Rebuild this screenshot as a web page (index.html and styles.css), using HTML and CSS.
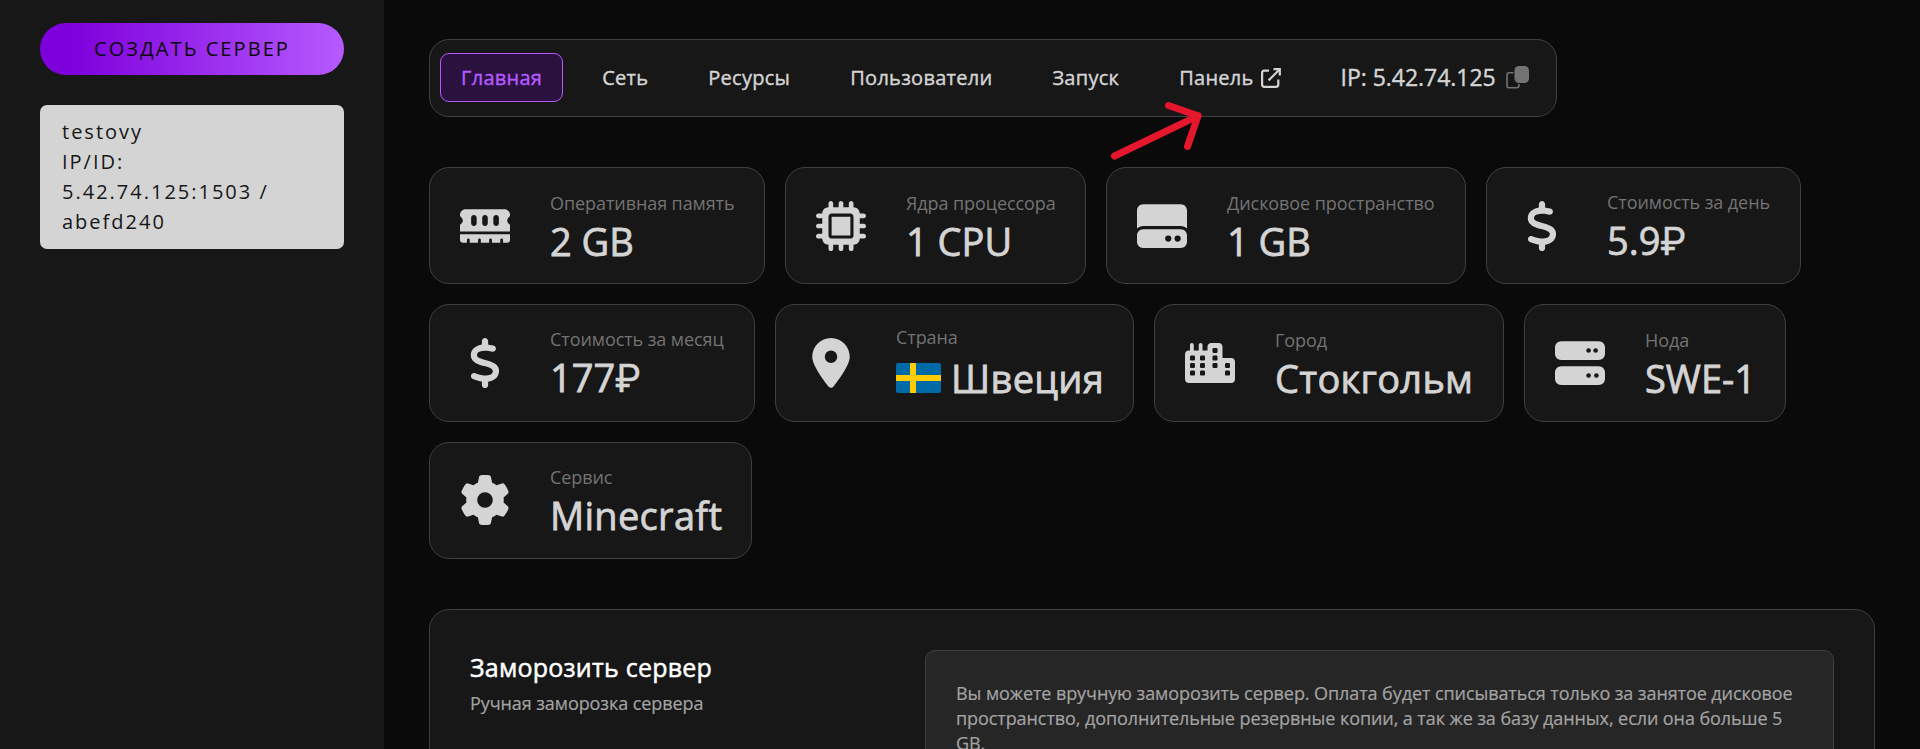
FILE: index.html
```html
<!DOCTYPE html>
<html lang="ru">
<head>
<meta charset="utf-8">
<title>Сервер</title>
<link rel="stylesheet" href="styles.css">
</head>
<body>
<div class="layout">
  <aside class="sidebar">
    <button class="create">СОЗДАТЬ СЕРВЕР</button>
    <div class="server">testovy<br>IP/ID:<br>5.42.74.125:1503 /<br>abefd240</div>
  </aside>
  <main class="content">
    <nav class="nav">
      <a class="tab active"><span>Главная</span></a>
      <a class="tab"><span>Сеть</span></a>
      <a class="tab"><span>Ресурсы</span></a>
      <a class="tab"><span>Пользователи</span></a>
      <a class="tab"><span>Запуск</span></a>
      <a class="tab"><span>Панель</span>
        <svg class="ext" viewBox="0 0 20 20" fill="none" stroke="currentColor" stroke-width="2.200"><path d="M8 2.600H3.400Q1.100 2.600 1.100 4.900V16.600Q1.100 18.900 3.400 18.900H15Q17.300 18.900 17.300 16.600V11.500"/><path d="M7.600 12.400 18 2"/><path d="M12.500 1.200H18.800V7.500"/></svg>
      </a>
      <div class="ip"><span>IP: 5.42.74.125</span>
        <svg class="copy" viewBox="0 0 23 23"><path d="M7.500 6.800H3Q1 6.800 1 8.800V19.800Q1 21.800 3 21.800H10.500Q13 21.800 13 19.300V18" fill="none" stroke="#737373" stroke-width="1.600"/><rect x="8.500" y="0" width="14.500" height="17" rx="4.500" fill="#737373"/></svg>
      </div>
      <svg class="arrow" viewBox="0 0 100 64" fill="none" stroke="#e5172c" stroke-width="7" stroke-linecap="round" stroke-linejoin="round"><path d="M4.500 56 88 15.800"/><path d="M58.500 5.500 88 15.800 77.500 46.500"/></svg>
    </nav>
    <section class="cards">
      <div class="card w-ram">
        <svg class="icon" viewBox="0 0 576 512"><path d="M64 64C28.700 64 0 92.700 0 128v7.400c0 6.800 4.400 12.600 10.100 16.300C23.300 160.300 32 175.100 32 192s-8.700 31.700-21.900 40.300C4.400 236 0 241.800 0 248.600V320H576V248.600c0-6.800-4.400-12.600-10.100-16.300C552.700 223.700 544 208.900 544 192s8.700-31.700 21.900-40.300c5.700-3.700 10.100-9.500 10.100-16.300V128c0-35.300-28.700-64-64-64H64zM576 352H0v64c0 17.700 14.300 32 32 32H80V416c0-8.800 7.200-16 16-16s16 7.200 16 16v32h96V416c0-8.800 7.200-16 16-16s16 7.200 16 16v32h96V416c0-8.800 7.200-16 16-16s16 7.200 16 16v32h96V416c0-8.800 7.200-16 16-16s16 7.200 16 16v32h48c17.700 0 32-14.300 32-32V352zM192 160v64c0 17.700-14.300 32-32 32s-32-14.300-32-32V160c0-17.700 14.300-32 32-32s32 14.300 32 32zm128 0v64c0 17.700-14.300 32-32 32s-32-14.300-32-32V160c0-17.700 14.300-32 32-32s32 14.300 32 32zm128 0v64c0 17.700-14.300 32-32 32s-32-14.300-32-32V160c0-17.700 14.300-32 32-32s32 14.300 32 32z"/></svg>
        <div class="info"><div class="label">Оперативная память</div><div class="value">2 GB</div></div>
      </div>
      <div class="card w-cpu">
        <svg class="icon" viewBox="0 0 512 512"><path d="M176 24c0-13.300-10.700-24-24-24s-24 10.700-24 24V64c-35.300 0-64 28.700-64 64H24c-13.300 0-24 10.700-24 24s10.700 24 24 24H64v56H24c-13.300 0-24 10.700-24 24s10.700 24 24 24H64v56H24c-13.300 0-24 10.700-24 24s10.700 24 24 24H64c0 35.300 28.700 64 64 64v40c0 13.300 10.700 24 24 24s24-10.700 24-24V448h56v40c0 13.300 10.700 24 24 24s24-10.700 24-24V448h56v40c0 13.300 10.700 24 24 24s24-10.700 24-24V448c35.300 0 64-28.700 64-64h40c13.300 0 24-10.700 24-24s-10.700-24-24-24H448V280h40c13.300 0 24-10.700 24-24s-10.700-24-24-24H448V176h40c13.300 0 24-10.700 24-24s-10.700-24-24-24H448c0-35.300-28.700-64-64-64V24c0-13.300-10.700-24-24-24s-24 10.700-24 24V64H280V24c0-13.300-10.700-24-24-24s-24 10.700-24 24V64H176V24zM160 128H352c17.700 0 32 14.300 32 32V352c0 17.700-14.300 32-32 32H160c-17.700 0-32-14.300-32-32V160c0-17.700 14.300-32 32-32zm192 32H160V352H352V160z"/></svg>
        <div class="info"><div class="label">Ядра процессора</div><div class="value">1 CPU</div></div>
      </div>
      <div class="card w-disk">
        <svg class="icon" viewBox="0 0 512 512"><path d="M0 96C0 60.700 28.700 32 64 32H448c35.300 0 64 28.700 64 64V280.400c-17-15.200-39.400-24.400-64-24.400H64c-24.600 0-47 9.200-64 24.400V96zM64 288H448c35.300 0 64 28.700 64 64v64c0 35.300-28.700 64-64 64H64c-35.300 0-64-28.700-64-64V352c0-35.300 28.700-64 64-64zM320 416a32 32 0 1 0 0-64 32 32 0 1 0 0 64zm128-32a32 32 0 1 0 -64 0 32 32 0 1 0 64 0z"/></svg>
        <div class="info"><div class="label">Дисковое пространство</div><div class="value">1 GB</div></div>
      </div>
      <div class="card w-day">
        <svg class="icon" viewBox="0 0 320 512"><path d="M160 0c17.700 0 32 14.300 32 32V67.700c1.600 .2 3.100 .4 4.700 .7c.4 .1 .7 .1 1.100 .2l48 8.800c17.400 3.200 28.900 19.900 25.700 37.200s-19.900 28.900-37.200 25.700l-47.500-8.700c-31.300-4.600-58.900-1.500-78.300 6.200s-27.200 18.300-29 28.100c-2 10.700-.5 16.700 1.200 20.400c1.800 3.900 5.500 8.300 12.800 13.200c16.300 10.700 41.300 17.700 73.700 26.300l2.900 .8c28.600 7.600 63.600 16.800 89.600 33.800c14.200 9.300 27.600 21.900 35.900 39.500c8.500 17.900 10.300 37.900 6.400 59.200c-6.900 38-33.100 63.400-65.600 76.700c-13.700 5.600-28.600 9.200-44.400 11V480c0 17.700-14.300 32-32 32s-32-14.300-32-32V445.100c-.4-.1-.9-.1-1.300-.2l-.2 0 0 0c-24.400-3.800-64.500-14.300-91.500-26.300c-16.100-7.200-23.400-26.100-16.200-42.200s26.100-23.400 42.200-16.200c20.900 9.300 55.300 18.500 75.200 21.600c31.900 4.700 58.200 2 76-5.300c16.900-6.900 24.600-16.900 26.800-28.900c1.900-10.600 .4-16.700-1.300-20.400c-1.900-4-5.600-8.400-13-13.300c-16.400-10.700-41.500-17.700-74-26.300l-2.800-.7 0 0C119.400 279.300 84.400 270 58.400 253c-14.200-9.300-27.500-22-35.800-39.600c-8.400-17.900-10.100-37.900-6.100-59.200C23.700 116 52.300 91.200 84.800 78.300c13.300-5.300 27.900-8.900 43.200-11V32c0-17.700 14.300-32 32-32z"/></svg>
        <div class="info"><div class="label">Стоимость за день</div><div class="value">5.9<span class="rub">₽</span></div></div>
      </div>
      <div class="card w-month">
        <svg class="icon" viewBox="0 0 320 512"><path d="M160 0c17.700 0 32 14.300 32 32V67.700c1.600 .2 3.100 .4 4.700 .7c.4 .1 .7 .1 1.100 .2l48 8.800c17.400 3.200 28.900 19.900 25.700 37.200s-19.900 28.900-37.200 25.700l-47.500-8.700c-31.300-4.600-58.900-1.500-78.300 6.200s-27.200 18.300-29 28.100c-2 10.700-.5 16.700 1.200 20.400c1.800 3.900 5.500 8.300 12.800 13.200c16.300 10.700 41.300 17.700 73.700 26.300l2.900 .8c28.600 7.600 63.600 16.800 89.600 33.800c14.200 9.300 27.600 21.900 35.900 39.500c8.500 17.900 10.300 37.900 6.400 59.200c-6.900 38-33.100 63.400-65.600 76.700c-13.700 5.600-28.600 9.200-44.400 11V480c0 17.700-14.300 32-32 32s-32-14.300-32-32V445.100c-.4-.1-.9-.1-1.300-.2l-.2 0 0 0c-24.400-3.800-64.500-14.300-91.500-26.300c-16.100-7.200-23.400-26.100-16.200-42.200s26.100-23.400 42.200-16.200c20.900 9.300 55.300 18.500 75.200 21.600c31.900 4.700 58.200 2 76-5.300c16.900-6.900 24.600-16.900 26.800-28.900c1.900-10.600 .4-16.700-1.300-20.400c-1.900-4-5.600-8.400-13-13.300c-16.400-10.700-41.500-17.700-74-26.300l-2.800-.7 0 0C119.400 279.300 84.400 270 58.400 253c-14.200-9.300-27.500-22-35.800-39.600c-8.400-17.900-10.100-37.900-6.100-59.200C23.700 116 52.300 91.200 84.800 78.300c13.300-5.300 27.900-8.900 43.200-11V32c0-17.700 14.300-32 32-32z"/></svg>
        <div class="info"><div class="label">Стоимость за месяц</div><div class="value">177<span class="rub">₽</span></div></div>
      </div>
      <div class="card w-country">
        <svg class="icon" viewBox="0 0 384 512"><path d="M215.700 499.200C267 435 384 279.400 384 192C384 86 298 0 192 0S0 86 0 192c0 87.400 117 243 168.300 307.200c12.300 15.300 35.100 15.300 47.400 0zM192 128a64 64 0 1 1 0 128 64 64 0 1 1 0-128z"/></svg>
        <div class="info"><div class="label label-flag">Страна</div><div class="value value-flag word"><svg class="flag" viewBox="0 0 45 30"><rect width="45" height="30" rx="2" fill="#006aa7"/><path d="M14 0h6v30h-6zM0 12h45v6H0z" fill="#fecc00"/></svg><span>Швеция</span></div></div>
      </div>
      <div class="card w-city">
        <svg class="icon" viewBox="0 0 640 512"><path d="M480 48c0-26.500-21.500-48-48-48H336c-26.500 0-48 21.500-48 48V96H224V24c0-13.300-10.700-24-24-24s-24 10.700-24 24V96H112V24c0-13.300-10.700-24-24-24S64 10.700 64 24V96H48C21.500 96 0 117.500 0 144V464c0 26.500 21.500 48 48 48H592c26.500 0 48-21.500 48-48V240c0-26.500-21.500-48-48-48H480z"/><g fill="#171717"><rect x="352" y="64" width="64" height="64" rx="16"/><rect x="352" y="160" width="64" height="64" rx="16"/><rect x="352" y="256" width="64" height="64" rx="16"/><rect x="64" y="160" width="64" height="64" rx="16"/><rect x="64" y="256" width="64" height="64" rx="16"/><rect x="64" y="352" width="64" height="64" rx="16"/><rect x="192" y="160" width="64" height="64" rx="16"/><rect x="192" y="256" width="64" height="64" rx="16"/><rect x="192" y="352" width="64" height="64" rx="16"/><rect x="512" y="256" width="64" height="64" rx="16"/><rect x="512" y="352" width="64" height="64" rx="16"/></g></svg>
        <div class="info"><div class="label">Город</div><div class="value word">Стокгольм</div></div>
      </div>
      <div class="card w-node">
        <svg class="icon" viewBox="0 0 512 512"><path d="M64 32C28.700 32 0 60.700 0 96v64c0 35.300 28.700 64 64 64H448c35.300 0 64-28.700 64-64V96c0-35.300-28.700-64-64-64H64zm280 72a24 24 0 1 1 0 48 24 24 0 1 1 0-48zm48 24a24 24 0 1 1 48 0 24 24 0 1 1 -48 0zM64 288c-35.300 0-64 28.700-64 64v64c0 35.300 28.700 64 64 64H448c35.300 0 64-28.700 64-64V352c0-35.300-28.700-64-64-64H64zm280 72a24 24 0 1 1 0 48 24 24 0 1 1 0-48zm56 24a24 24 0 1 1 48 0 24 24 0 1 1 -48 0z"/></svg>
        <div class="info"><div class="label">Нода</div><div class="value">SWE-1</div></div>
      </div>
      <div class="card w-service">
        <svg class="icon" viewBox="0 0 512 512"><path d="M495.900 166.600c3.200 8.700 .5 18.400-6.400 24.600l-43.300 39.400c1.100 8.300 1.700 16.800 1.700 25.400s-.6 17.100-1.700 25.400l43.300 39.400c6.900 6.200 9.600 15.900 6.400 24.600c-4.400 11.900-9.700 23.300-15.800 34.300l-4.700 8.100c-6.600 11-14 21.400-22.100 31.200c-5.900 7.200-15.700 9.600-24.500 6.800l-55.700-17.700c-13.400 10.300-28.200 18.900-44 25.400l-12.500 57.100c-2 9.100-9 16.300-18.200 17.800c-13.800 2.300-28 3.500-42.500 3.500s-28.700-1.200-42.500-3.500c-9.200-1.500-16.200-8.700-18.200-17.800l-12.500-57.100c-15.800-6.500-30.600-15.100-44-25.400L83.100 425.900c-8.800 2.800-18.600 .3-24.500-6.800c-8.100-9.800-15.500-20.200-22.100-31.200l-4.700-8.100c-6.100-11-11.400-22.400-15.800-34.300c-3.200-8.700-.5-18.400 6.400-24.600l43.300-39.400C64.600 273.100 64 264.600 64 256s.6-17.100 1.700-25.400L22.400 191.200c-6.900-6.200-9.600-15.900-6.400-24.600c4.400-11.900 9.700-23.300 15.800-34.300l4.700-8.100c6.600-11 14-21.400 22.100-31.200c5.900-7.200 15.700-9.600 24.500-6.800l55.700 17.700c13.400-10.300 28.200-18.900 44-25.400l12.500-57.100c2-9.100 9-16.300 18.200-17.800C227.300 1.200 241.500 0 256 0s28.700 1.200 42.500 3.500c9.200 1.500 16.200 8.700 18.200 17.800l12.500 57.100c15.800 6.500 30.600 15.100 44 25.400l55.700-17.700c8.800-2.800 18.600-.3 24.500 6.800c8.100 9.800 15.500 20.200 22.100 31.200l4.700 8.100c6.100 11 11.400 22.400 15.800 34.300zM256 336a80 80 0 1 0 0-160 80 80 0 1 0 0 160z"/></svg>
        <div class="info"><div class="label">Сервис</div><div class="value word">Minecraft</div></div>
      </div>
    </section>
    <section class="freeze">
      <div class="freeze-head">
        <h2>Заморозить сервер</h2>
        <p>Ручная заморозка сервера</p>
      </div>
      <div class="notice">Вы можете вручную заморозить сервер. Оплата будет списываться только за занятое дисковое<br>пространство, дополнительные резервные копии, а так же за базу данных, если она больше 5<br>GB.</div>
    </section>
  </main>
</div>
</body>
</html>
```
FILE: styles.css
```css
* { box-sizing: border-box; }
html, body { margin: 0; height: 100%; }
body {
  overflow: hidden;
  background: #0a0a0a;
  color: #d4d4d4;
  font-family: "Open Sans", "Noto Sans", sans-serif;
}
.layout { display: flex; height: 100vh; overflow: hidden; }
.sidebar {
  flex: none;
  width: 384px;
  padding: 23px 40px 0;
  background: #171717;
}
.create {
  display: block;
  width: 304px;
  height: 52px;
  padding: 0;
  border: 0;
  border-radius: 26px;
  background: linear-gradient(90deg, #7e00dc 10%, #b65aff);
  color: #0a0a0a;
  font: 400 20px/52px "Open Sans", "Noto Sans", sans-serif;
  letter-spacing: 2.080px;
}
.server {
  height: 144px;
  margin-top: 30px;
  padding: 12px 22px;
  border-radius: 7px;
  background: #d4d4d4;
  color: #171717;
  font-size: 20px;
  line-height: 30px;
  letter-spacing: 2px;
  white-space: nowrap;
}
.content { flex: 1; padding: 39px 45px 0; }
.nav {
  position: relative;
  display: flex;
  align-items: center;
  gap: 18px;
  width: 1128px;
  height: 78px;
  padding: 0 10px 1px;
  border: 1px solid #404040;
  border-radius: 20px;
  background: #171717;
  white-space: nowrap;
}
.tab {
  display: flex;
  align-items: center;
  gap: 7px;
  height: 49px;
  padding: 0 20px;
  border: 1px solid transparent;
  border-radius: 9px;
  font-size: 20px;
  letter-spacing: 0.270px;
  -webkit-text-stroke: 0.400px currentColor;
}
.active { border-color: #b65aff; background: #2b113d; color: #b65aff; }
.ext { width: 20px; height: 20px; }
.ip {
  display: flex;
  align-items: center;
  gap: 10px;
  padding-left: 21px;
  font-size: 23px;
  -webkit-text-stroke: 0.400px currentColor;
}
.ip span { margin-top: -2px; letter-spacing: -0.040px; }
.copy { width: 23px; height: 23px; }
.arrow { position: absolute; left: 680px; top: 60px; width: 100px; height: 64px; }
.cards { display: flex; flex-wrap: wrap; gap: 20px; margin-top: 50px; }
.card {
  display: flex;
  align-items: center;
  gap: 40px;
  height: 117.330px;
  padding: 0 30px;
  border: 1px solid #404040;
  border-radius: 20px;
  background: #171717;
  white-space: nowrap;
}
.w-ram { width: 336px; }
.w-cpu { width: 301px; }
.w-disk { width: 360px; }
.w-day { width: 315px; }
.w-month { width: 326px; }
.w-country { width: 359px; }
.w-city { width: 350px; }
.w-node { width: 262px; }
.w-service { width: 323px; }
.icon { flex: none; width: 50px; height: 50px; fill: #d4d4d4; }
.info { padding-top: 6px; }
.label { color: #737373; font-size: 18px; line-height: 24px; letter-spacing: -0.080px; }
.value { font-size: 38px; line-height: 52px; -webkit-text-stroke: 0.800px currentColor; }
.word { letter-spacing: 0.300px; }
.rub { font-family: Roboto, sans-serif; -webkit-text-stroke: 0.300px currentColor; }
.label-flag { margin: -3px 0 3px; }
.value-flag { display: flex; align-items: center; gap: 10px; }
.flag { width: 45px; height: 30px; }
.freeze {
  display: flex;
  justify-content: space-between;
  width: 1446px;
  height: 300px;
  margin-top: 50px;
  padding: 40px;
  border: 1px solid #404040;
  border-radius: 20px;
  background: #171717;
}
h2 {
  margin: 0;
  color: #fff;
  font-size: 25px;
  font-weight: 400;
  line-height: 34px;
  letter-spacing: 0.230px;
  -webkit-text-stroke: 0.500px currentColor;
}
.freeze-head p {
  margin: 1px 0 0;
  color: #a3a3a3;
  font-size: 18px;
  line-height: 36px;
  letter-spacing: -0.080px;
  -webkit-text-stroke: 0.200px currentColor;
}
.notice {
  width: 909px;
  height: 240px;
  padding: 30px;
  border: 1px solid #404040;
  border-radius: 10px;
  background: #262626;
  color: #a3a3a3;
  font-size: 18px;
  line-height: 25px;
  letter-spacing: -0.083px;
  -webkit-text-stroke: 0.200px currentColor;
  white-space: nowrap;
}
```
